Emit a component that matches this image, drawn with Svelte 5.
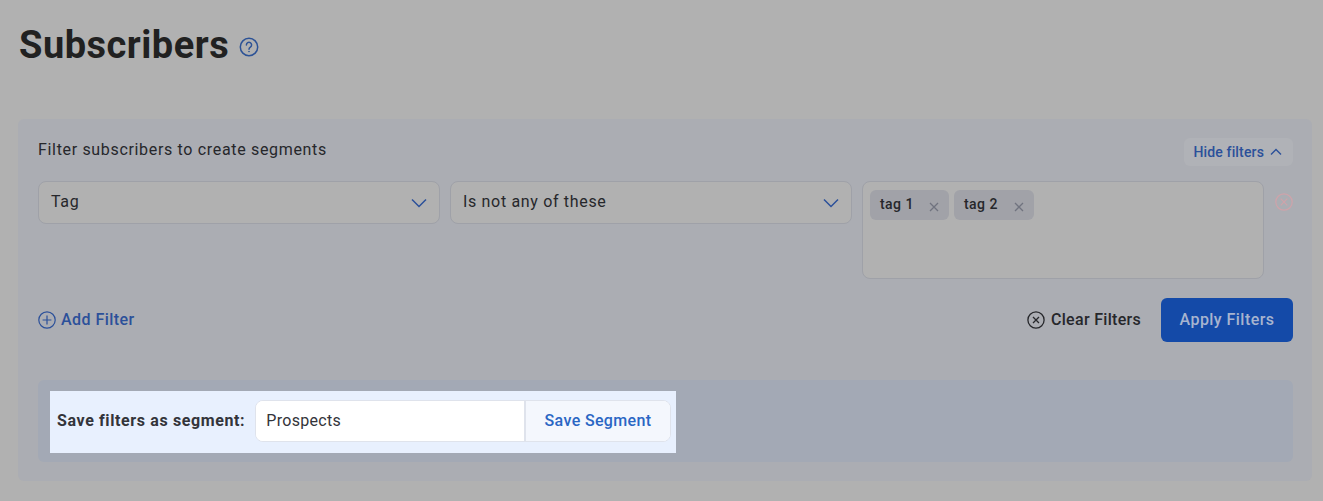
<script>
  const tags = ['tag 1', 'tag 2'];
</script>

<div class="page">
  <header class="head">
    <h1>Subscribers</h1>
    <svg class="help" viewBox="0 0 20 20" width="20" height="20" fill="none" stroke="#2c5296" stroke-width="1.5">
      <circle cx="10" cy="10" r="8.7" />
      <path d="M7.4 7.9a2.6 2.6 0 1 1 4 2.2c-.9.6-1.4 1-1.4 2.1" stroke-linecap="round" />
      <circle cx="10" cy="14.6" r=".5" fill="#2c5296" stroke-width=".6" />
    </svg>
  </header>

  <section class="panel">
    <div class="top">
      <p class="intro">Filter subscribers to create segments</p>
      <button class="hide">
        Hide filters
        <svg viewBox="0 0 12 8" width="12" height="8" fill="none" stroke="#2b509a" stroke-width="1.4"><path d="M1 6.6 6 1.6l5 5" /></svg>
      </button>
    </div>

    <div class="filter">
      <div class="select">
        <span>Tag</span>
        <svg viewBox="0 0 16 10" width="16" height="10" fill="none" stroke="#2b509a" stroke-width="1.5"><path d="m1 1.5 7 7 7-7" /></svg>
      </div>
      <div class="select">
        <span>Is not any of these</span>
        <svg viewBox="0 0 16 10" width="16" height="10" fill="none" stroke="#2b509a" stroke-width="1.5"><path d="m1 1.5 7 7 7-7" /></svg>
      </div>
      <div class="tagbox">
        {#each tags as tag}
          <span class="tag">
            <span class="tagtext">{tag}</span>
            <svg viewBox="0 0 10 10" width="10" height="10" fill="none" stroke="#70737f" stroke-width="1.3"><path d="m1 1 8 8M9 1l-8 8" /></svg>
          </span>
        {/each}
      </div>
      <svg class="remove" viewBox="0 0 18 18" width="18" height="18" fill="none" stroke="#cfa3aa" stroke-width="1.2">
        <circle cx="9" cy="9" r="8.2" />
        <path d="m5.7 5.7 6.6 6.6m0-6.6-6.6 6.6" />
      </svg>
    </div>

    <div class="actions">
      <button class="add">
        <svg viewBox="0 0 18 18" width="18" height="18" fill="none" stroke="#2b509a" stroke-width="1.2">
          <circle cx="9" cy="9" r="8.2" />
          <path d="M9 4.6v8.8M4.6 9h8.8" />
        </svg>
        <span>Add Filter</span>
      </button>
      <div class="right">
        <button class="clear">
          <svg viewBox="0 0 18 18" width="18" height="18" fill="none" stroke="#26272b" stroke-width="1.3">
            <circle cx="9" cy="9" r="8.1" />
            <path d="m6 6 6 6m0-6-6 6" />
          </svg>
          <span>Clear Filters</span>
        </button>
        <button class="apply"><span>Apply Filters</span></button>
      </div>
    </div>

    <div class="segment">
      <div class="spot">
        <label for="seg">Save filters as segment:</label>
        <div class="group">
          <input id="seg" value="Prospects" />
          <button>Save Segment</button>
        </div>
      </div>
    </div>
  </section>
</div>

<style>
  :global(body) {
    margin: 0;
    background: #b1b1b1;
  }
  * {
    box-sizing: border-box;
  }
  .page {
    height: 501px;
    padding: 0 11px 0 18px;
    overflow: hidden;
    font-family: Roboto, "Liberation Sans", sans-serif;
    color: #26272b;
  }
  .head {
    display: flex;
    align-items: center;
    gap: 10px;
    height: 119px;
    padding: 0 0 29px 1px;
  }
  h1 {
    margin: 0;
    font-size: 38px;
    line-height: 42px;
    font-weight: 700;
    letter-spacing: 0.5px;
    color: #212121;
  }
  .help {
    margin-top: 3px;
  }
  .panel {
    height: 362px;
    padding: 19px 19px 19px 20px;
    background: #abadb3;
    border-radius: 6px;
  }
  .top {
    display: flex;
    justify-content: space-between;
    height: 43px;
  }
  .intro {
    margin: 2px 0 0;
    font-size: 16px;
    line-height: 19px;
    letter-spacing: 0.67px;
  }
  button {
    font-family: inherit;
    border: 0;
    background: none;
    padding: 0;
    display: flex;
    align-items: center;
  }
  .hide {
    height: 28px;
    padding: 0 11px 0 9px;
    gap: 6px;
    background: #b0b2b7;
    border-radius: 6px;
    font-size: 14px;
    font-weight: 500;
    letter-spacing: 0.15px;
    color: #2b509a;
  }
  .filter {
    display: flex;
    align-items: flex-start;
    gap: 10px;
    height: 117px;
  }
  .select,
  .tagbox {
    flex: none;
    width: 402px;
    background: #b1b1b1;
    border: 1px solid #9fa1a8;
    border-radius: 8px;
  }
  .select {
    height: 43px;
    padding: 0 12px;
    display: flex;
    align-items: center;
    justify-content: space-between;
    font-size: 16px;
    letter-spacing: 0.67px;
  }
  .select span {
    margin-top: -3px;
  }
  .tagbox {
    height: 98px;
    padding: 8px 7px;
    display: flex;
    align-items: flex-start;
    gap: 5px;
  }
  .tag {
    display: flex;
    align-items: center;
    justify-content: space-between;
    width: 79px;
    height: 30px;
    padding: 0 10px 0 10px;
    background: #a1a2a8;
    border-radius: 6px;
    font-size: 14px;
    font-weight: 500;
    letter-spacing: 0.45px;
  }
  .tag + .tag {
    width: 80px;
  }
  .tagtext {
    margin-top: -2px;
  }
  .tag svg {
    margin-top: 3px;
  }
  .remove {
    flex: none;
    display: block;
    margin: 12px 0 0 1px;
  }
  .actions {
    display: flex;
    align-items: center;
    justify-content: space-between;
    height: 44px;
  }
  .actions span {
    margin-top: -2px;
  }
  .add {
    gap: 5px;
    font-size: 16px;
    font-weight: 500;
    letter-spacing: 0.45px;
    color: #2b509a;
  }
  .right {
    display: flex;
    align-items: center;
    gap: 20px;
  }
  .clear {
    gap: 6px;
    font-size: 16px;
    font-weight: 500;
    letter-spacing: 0.3px;
    color: #26272b;
  }
  .apply {
    width: 132px;
    height: 44px;
    justify-content: center;
    background: #144aa8;
    border-radius: 6px;
    font-size: 16px;
    font-weight: 500;
    letter-spacing: 0.45px;
    color: #a7b4cf;
  }
  .segment {
    margin-top: 38px;
    height: 82px;
    padding: 11px 12px;
    background: #a3a9b5;
    border-radius: 6px;
  }
  .spot {
    display: flex;
    align-items: center;
    gap: 10px;
    width: 626px;
    height: 62px;
    padding: 0 5px 2px 7px;
    background: #e8f0fe;
  }
  label {
    padding-bottom: 2px;
    font-size: 16px;
    font-weight: 700;
    letter-spacing: 0.62px;
    color: #33343a;
    white-space: nowrap;
  }
  .group {
    display: flex;
    flex: 1;
    height: 42px;
    background: #fff;
    border: 1px solid #dfe3ec;
    border-radius: 8px;
    overflow: hidden;
  }
  input {
    flex: 1;
    min-width: 0;
    border: 0;
    outline: 0;
    padding: 0 10px 2px;
    background: #fff;
    font: 400 16px Roboto, sans-serif;
    letter-spacing: 0.3px;
    color: #33343a;
  }
  .group button {
    width: 146px;
    padding-bottom: 2px;
    justify-content: center;
    background: #f4f7fd;
    border-left: 2px solid #dfe3ec;
    font-size: 16px;
    font-weight: 500;
    letter-spacing: 0.35px;
    color: #2a66c4;
  }
</style>
